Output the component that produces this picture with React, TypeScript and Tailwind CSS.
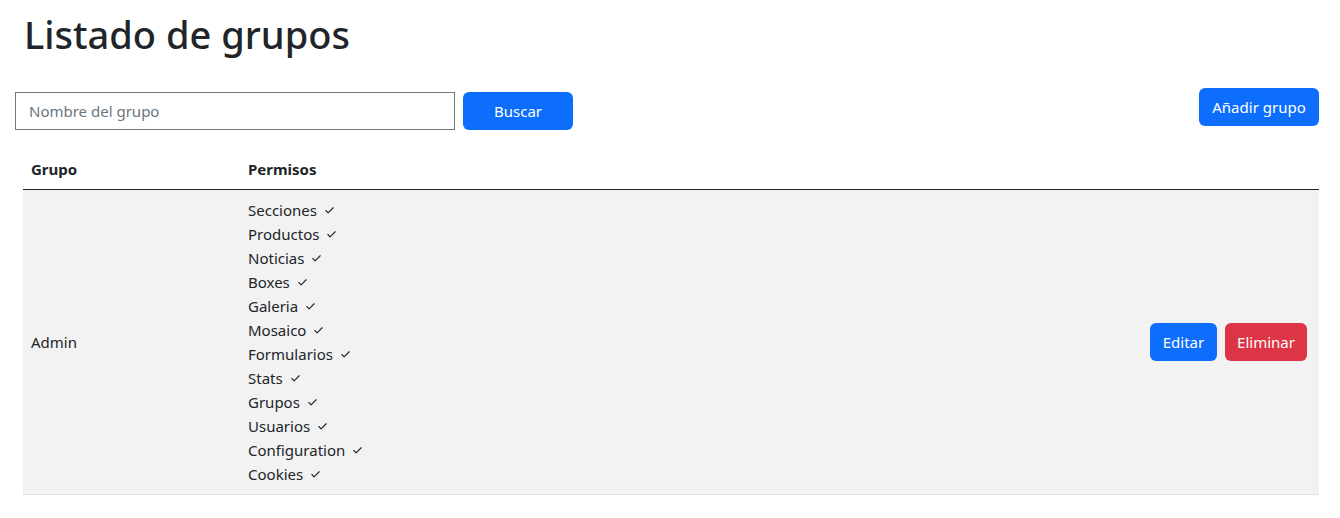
import { Check } from "lucide-react";

const PERMISOS = [
  "Secciones",
  "Productos",
  "Noticias",
  "Boxes",
  "Galeria",
  "Mosaico",
  "Formularios",
  "Stats",
  "Grupos",
  "Usuarios",
  "Configuration",
  "Cookies",
];

export default function App() {
  return (
    <div
      className="min-h-screen bg-white pl-[23px] pr-[21px] pt-[10px] text-[15px] text-[#212529]"
      style={{ fontFamily: '"Segoe UI", "Noto Sans", "Open Sans", sans-serif' }}
    >
      {/* Title */}
      <h1 className="ml-px text-[38px] font-medium leading-[48px]">Listado de grupos</h1>

      {/* Toolbar */}
      <div className="mt-[30px] flex items-start justify-between">
        <div className="-ml-2 mt-1 flex gap-2">
          <input
            type="text"
            placeholder="Nombre del grupo"
            className="h-[38px] w-[440px] border border-[#767676] px-[13px] text-[15px] placeholder:text-[#6c757d] outline-none"
          />
          <button className="h-[38px] w-[110px] rounded-[6px] bg-[#0d6efd] text-white">Buscar</button>
        </div>
        <button className="h-[38px] w-[120px] rounded-[6px] bg-[#0d6efd] text-white">Añadir grupo</button>
      </div>

      {/* Table */}
      <table className="mt-[19px] w-full border-collapse">
        <thead>
          <tr className="border-b border-[#212529]">
            <th className="w-[217px] px-2 py-2 text-left font-bold leading-6">Grupo</th>
            <th className="px-2 py-2 text-left font-bold leading-6">Permisos</th>
            <th className="px-2 py-2"></th>
          </tr>
        </thead>
        <tbody>
          <tr className="border-b border-[#dee2e6] bg-[#f2f2f2]">
            <td className="px-2 py-2 align-middle leading-6">Admin</td>
            <td className="px-2 py-2 leading-6">
              {PERMISOS.map((p) => (
                <div key={p} className="flex items-center gap-[7px]">
                  <span>{p}</span>
                  <Check size={11} strokeWidth={2.5} />
                </div>
              ))}
            </td>
            <td className="px-3 py-2 align-middle">
              <div className="flex justify-end gap-2">
                <button className="h-[38px] w-[67px] rounded-[6px] bg-[#0d6efd] text-white">Editar</button>
                <button className="h-[38px] w-[82px] rounded-[6px] bg-[#dc3545] text-white">Eliminar</button>
              </div>
            </td>
          </tr>
        </tbody>
      </table>
    </div>
  );
}
